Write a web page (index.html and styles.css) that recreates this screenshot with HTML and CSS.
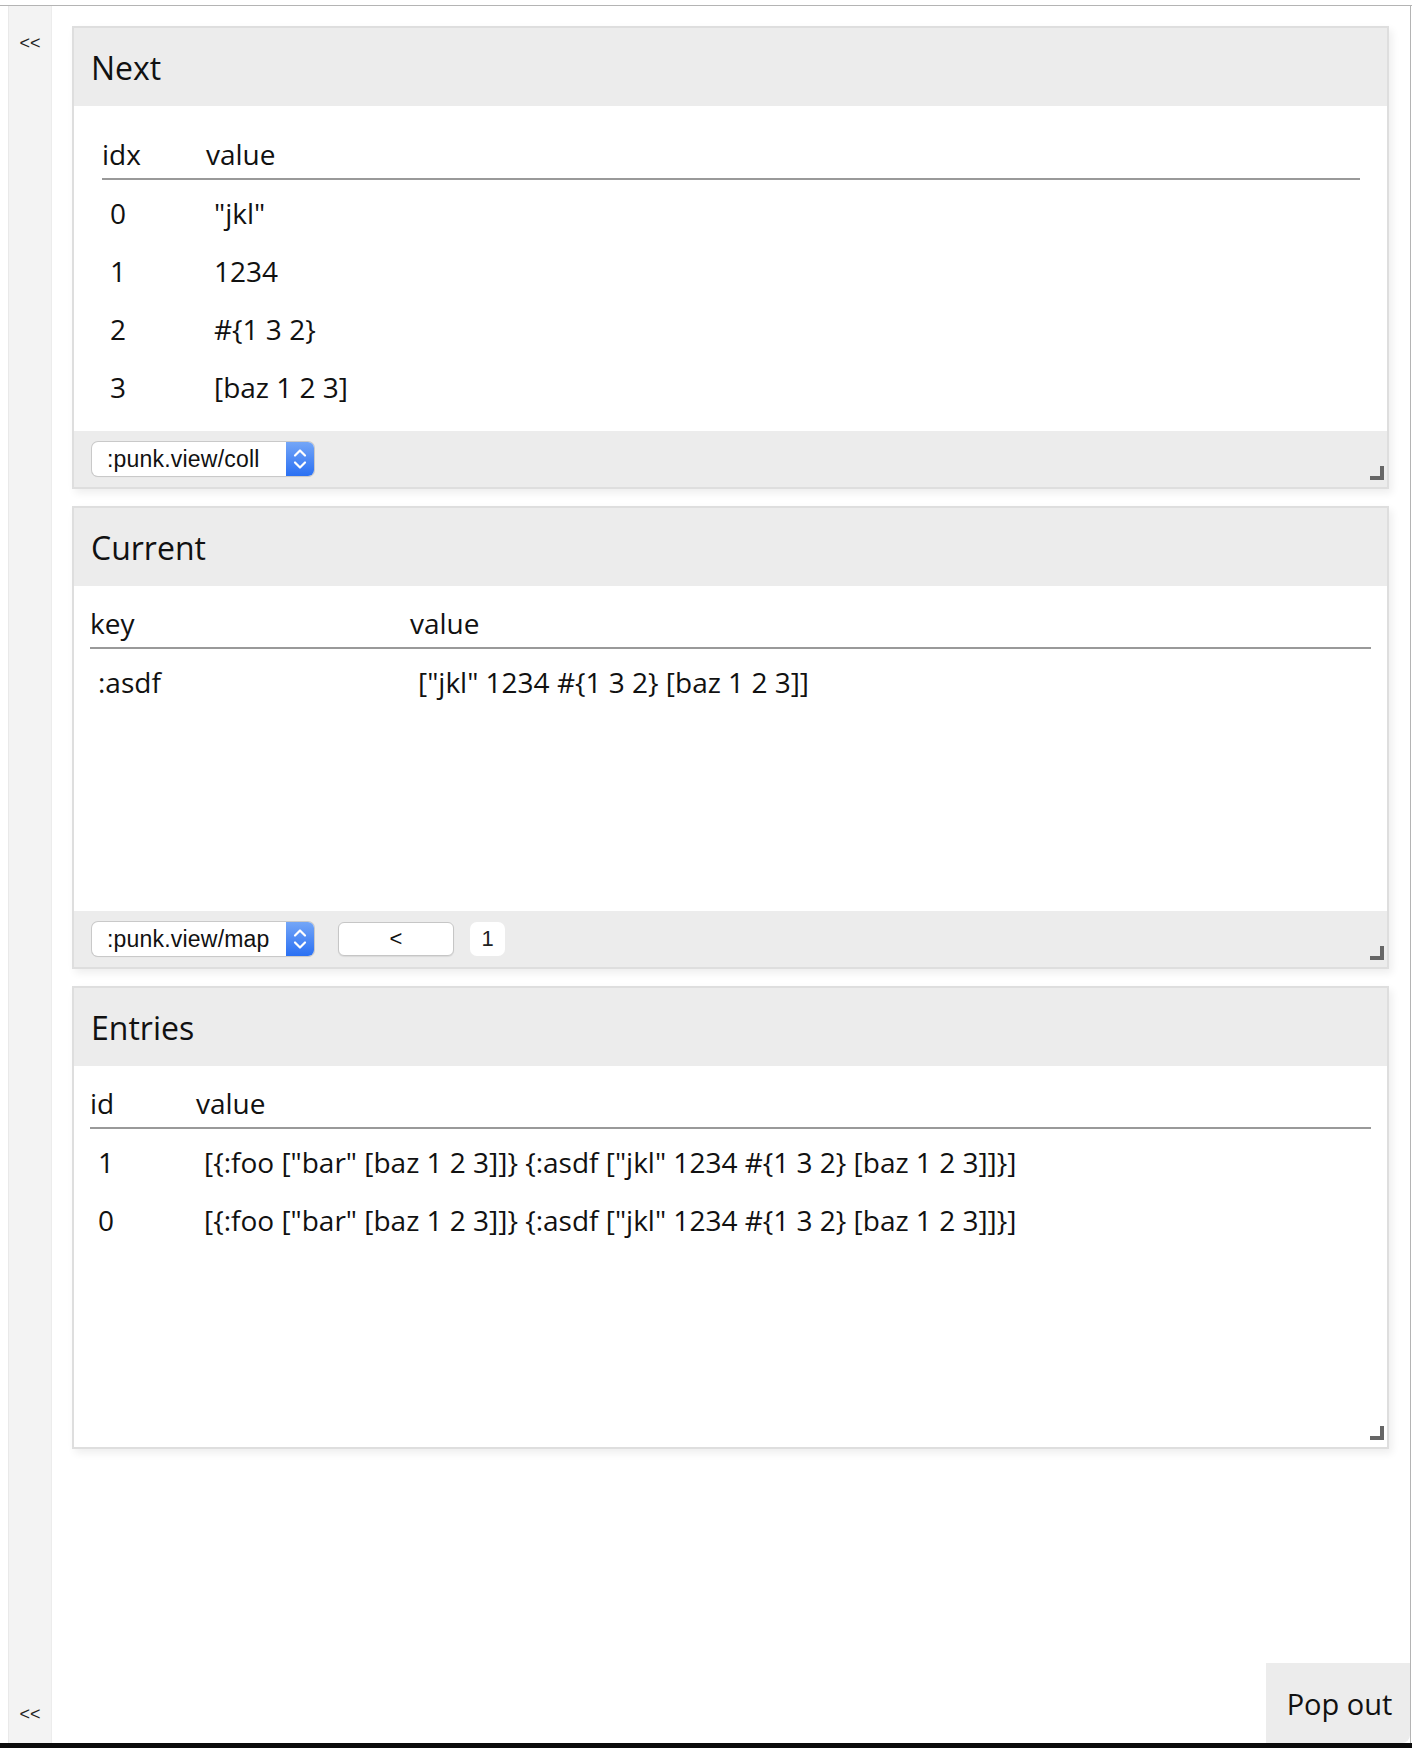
FILE: index.html
```html
<!DOCTYPE html>
<html>
<head>
<meta charset="utf-8">
<link rel="stylesheet" href="styles.css">
</head>
<body>
<div class="screen">
  <div class="topbar"></div>
  <div class="main">
    <div class="sidebar">
      <span class="collapse">&lt;&lt;</span>
      <span class="collapse">&lt;&lt;</span>
    </div>
    <div class="content">
      <section class="panel">
        <div class="panel-header">Next</div>
        <div class="panel-body">
          <div class="tbl tbl-inset">
            <div class="tr th"><div class="c c-idx">idx</div><div class="c">value</div></div>
            <div class="tbody">
              <div class="tr"><div class="c c-idx">0</div><div class="c">"jkl"</div></div>
              <div class="tr"><div class="c c-idx">1</div><div class="c">1234</div></div>
              <div class="tr"><div class="c c-idx">2</div><div class="c">#{1 3 2}</div></div>
              <div class="tr"><div class="c c-idx">3</div><div class="c">[baz 1 2 3]</div></div>
            </div>
          </div>
        </div>
        <div class="panel-footer">
          <div class="select">
            <span class="select-text">:punk.view/coll</span>
            <span class="select-arrows"><svg width="28" height="34" viewBox="0 0 28 34"><path d="M9 13.5 L14 8.5 L19 13.5 M9 20.5 L14 25.5 L19 20.5" fill="none" stroke="#fff" stroke-width="2.2" stroke-linecap="round" stroke-linejoin="round"/></svg></span>
          </div>
        </div>
        <div class="grip"></div>
      </section>

      <section class="panel">
        <div class="panel-header">Current</div>
        <div class="panel-body">
          <div class="tbl">
            <div class="tr th"><div class="c c-key">key</div><div class="c">value</div></div>
            <div class="tbody">
              <div class="tr"><div class="c c-key">:asdf</div><div class="c">["jkl" 1234 #{1 3 2} [baz 1 2 3]]</div></div>
            </div>
          </div>
        </div>
        <div class="panel-footer">
          <div class="select">
            <span class="select-text">:punk.view/map</span>
            <span class="select-arrows"><svg width="28" height="34" viewBox="0 0 28 34"><path d="M9 13.5 L14 8.5 L19 13.5 M9 20.5 L14 25.5 L19 20.5" fill="none" stroke="#fff" stroke-width="2.2" stroke-linecap="round" stroke-linejoin="round"/></svg></span>
          </div>
          <button class="btn">&lt;</button>
          <span class="page">1</span>
        </div>
        <div class="grip"></div>
      </section>

      <section class="panel">
        <div class="panel-header">Entries</div>
        <div class="panel-body">
          <div class="tbl">
            <div class="tr th"><div class="c c-id">id</div><div class="c">value</div></div>
            <div class="tbody">
              <div class="tr"><div class="c c-id">1</div><div class="c">[{:foo ["bar" [baz 1 2 3]]} {:asdf ["jkl" 1234 #{1 3 2} [baz 1 2 3]]}]</div></div>
              <div class="tr"><div class="c c-id">0</div><div class="c">[{:foo ["bar" [baz 1 2 3]]} {:asdf ["jkl" 1234 #{1 3 2} [baz 1 2 3]]}]</div></div>
            </div>
          </div>
        </div>
        <div class="grip"></div>
      </section>
    </div>
    <button class="popout">Pop out</button>
  </div>
  <div class="taskbar"></div>
</div>
</body>
</html>
```

FILE: styles.css
```css
html, body {
  margin: 0;
  padding: 0;
  background: #fff;
}

.screen {
  width: 1412px;
  height: 1748px;
  display: flex;
  flex-direction: column;
  overflow: hidden;
  font-family: "Open Sans", "Noto Sans", sans-serif;
  color: #111;
}

.topbar {
  height: 5px;
  background: #fff;
  border-bottom: 1px solid #b4b4b4;
}

.main {
  flex: 1;
  width: 1410px;
  display: flex;
  position: relative;
  border-right: 1px solid #b4b4b4;
  min-height: 0;
}

.sidebar {
  margin-left: 8px;
  width: 42px;
  background: #f3f3f3;
  border-left: 1px solid #e9e9e9;
  border-right: 1px solid #ececec;
  display: flex;
  flex-direction: column;
  justify-content: space-between;
  align-items: center;
  padding: 26px 0 18px;
}

.collapse {
  font-family: "Liberation Sans", Arial, sans-serif;
  font-size: 18px;
  line-height: 22px;
  color: #222;
}

.content {
  padding: 20px 0 0 20px;
  display: flex;
  flex-direction: column;
  gap: 17px;
}

.panel {
  position: relative;
  width: 1317px;
  height: 463px;
  box-sizing: border-box;
  border: 2px solid #dedede;
  box-shadow: 3px 4px 8px rgba(0, 0, 0, 0.07);
  display: flex;
  flex-direction: column;
  background: #fff;
}

.panel-header {
  height: 78px;
  flex: none;
  background: #ececec;
  display: flex;
  align-items: center;
  padding-left: 17px;
  font-size: 32px;
}

.panel-body {
  flex: 1;
  padding: 0 16px;
  min-height: 0;
}

.panel-footer {
  height: 56px;
  flex: none;
  background: #ececec;
  display: flex;
  align-items: center;
  padding-left: 18px;
}

.tbl {
  font-size: 28px;
}

.tbl-inset {
  margin: 11px 11px 0 12px;
}

.tr {
  display: flex;
  align-items: center;
  height: 58px;
}

.tr.th {
  height: auto;
  padding: 17px 0 4px;
  line-height: 40px;
  border-bottom: 2px solid #999;
}

.tbody {
  padding-top: 4px;
}

.tbody .c {
  padding-left: 8px;
}

.c-idx { width: 104px; flex: none; }
.c-key { width: 320px; flex: none; }
.c-id  { width: 106px; flex: none; }

.tbody .c-idx { width: 96px; }
.tbody .c-key { width: 312px; }
.tbody .c-id  { width: 98px; }

.select {
  display: flex;
  width: 222px;
  height: 34px;
  box-sizing: border-box;
  border-radius: 6px;
  background: #fff;
  box-shadow: 0 0 0 1px #c9c9c9, 0 1px 1px rgba(0, 0, 0, 0.12);
  overflow: hidden;
  font-family: "Liberation Sans", Arial, sans-serif;
  font-size: 23px;
  letter-spacing: 0.2px;
}

.select-text {
  flex: 1;
  padding-left: 15px;
  line-height: 34px;
  color: #111;
}

.select-arrows {
  width: 28px;
  height: 34px;
  background: linear-gradient(#74a6f7, #2a70f3);
  display: block;
}

.select-arrows svg {
  display: block;
}

.btn {
  margin-left: 24px;
  width: 116px;
  height: 34px;
  background: #fff;
  border: 1px solid #c6c6c6;
  border-radius: 6px;
  box-shadow: 0 1px 1px rgba(0, 0, 0, 0.08);
  font-family: "Liberation Sans", Arial, sans-serif;
  font-size: 22px;
  color: #111;
  padding: 0;
}

.page {
  margin-left: 16px;
  width: 35px;
  height: 34px;
  background: #fff;
  border-radius: 7px;
  display: flex;
  align-items: center;
  justify-content: center;
  font-family: "Liberation Sans", Arial, sans-serif;
  font-size: 22px;
  color: #222;
}

.grip {
  position: absolute;
  right: 3px;
  bottom: 7px;
  width: 14px;
  height: 4px;
  background: #666;
}

.grip::after {
  content: "";
  position: absolute;
  right: 0;
  bottom: 0;
  width: 4px;
  height: 14px;
  background: #666;
}

.popout {
  position: absolute;
  right: 0;
  bottom: 0;
  width: 144px;
  height: 80px;
  border: none;
  border-bottom-right-radius: 8px;
  background: #ececec;
  font-family: "Open Sans", "Noto Sans", sans-serif;
  font-size: 29px;
  color: #111;
  padding: 0 0 0 3px;
}

.taskbar {
  height: 5px;
  background: #0b0b0b;
}
```
